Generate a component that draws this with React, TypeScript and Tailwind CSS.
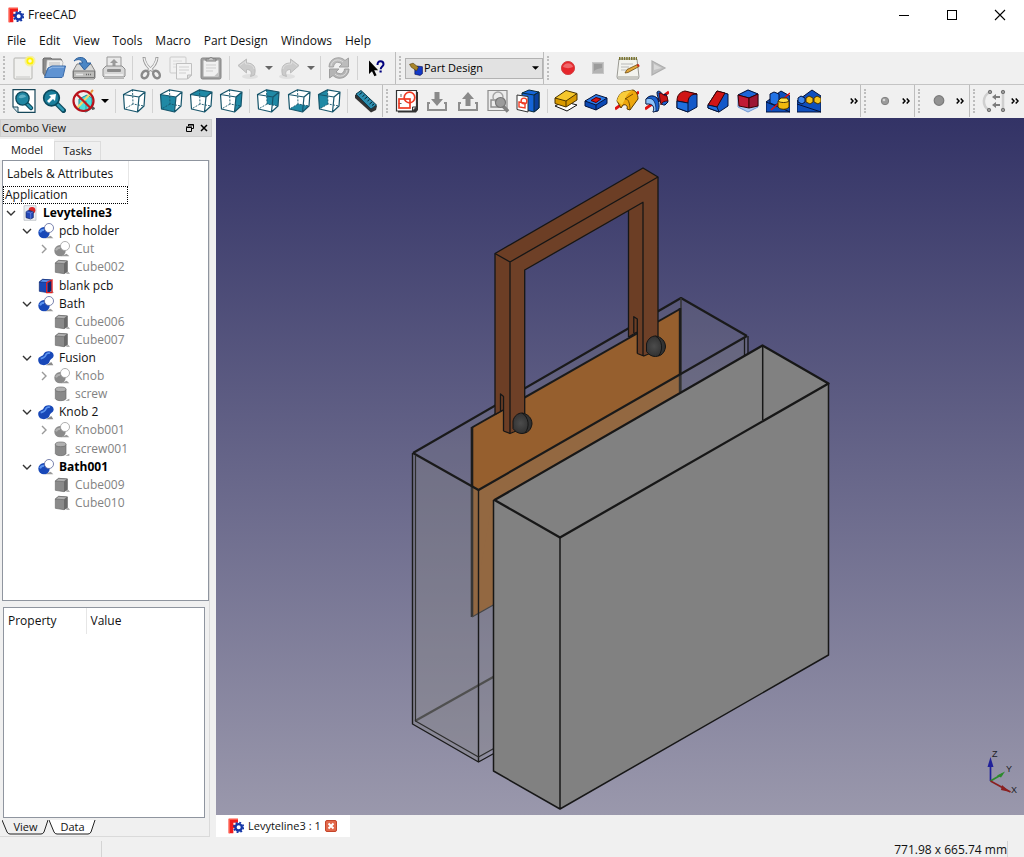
import type { ReactNode } from "react";

const INK = "#0b2a3a";

function Svg({ size = 24, children }: { size?: number; children: ReactNode }) {
  return (
    <svg width={size} height={size} viewBox="0 0 24 24" fill="none" aria-hidden="true" className="shrink-0">
      {children}
    </svg>
  );
}

/* ---------- file toolbar ---------- */

const NewIcon = () => (
  <Svg>
    <rect x="2" y="2" width="18" height="21" rx="1" fill="#f1f1ef" stroke="#b4b4b0" />
    <path d="M4 21h14" stroke="#dcdcda" strokeWidth="2" />
    <circle cx="18" cy="5" r="5.5" fill="#f7f08a" opacity=".8" />
    <circle cx="18" cy="5" r="3.6" fill="#fff200" />
    <circle cx="18" cy="5" r="1.8" fill="#fffbd0" />
  </Svg>
);
const OpenIcon = () => (
  <Svg>
    <path d="M1 3l1-1h7l1 1h9l1 2v15H3L1 17z" fill="#8b8b8b" stroke="#6b6b6b" />
    <path d="M5 4h14l2 2-1 8H4z" fill="#f0f0ee" stroke="#aaa" strokeWidth=".6" />
    <path d="M7 7h11M7 9h11" stroke="#bbb" />
    <path d="M6 12l4-2h13.500l-2.500 10.500-1 1H2.500z" fill="#5f93d2" stroke="#3a6ba8" />
    <path d="M7 13l3.500-1.800H22" stroke="#9cc0ea" />
  </Svg>
);
const SaveIcon = () => (
  <Svg>
    <path d="M1 15L5 8h14l4 7v7l-1 1H2l-1-1z" fill="#d8d8d6" stroke="#858585" />
    <path d="M1.500 15h21v6.500h-21z" fill="#bcbcba" stroke="#777" />
    <path d="M14 18.500h6" stroke="#6b6b6b" strokeWidth="1.500" strokeDasharray="1 1" />
    <path d="M4 18.500h7" stroke="#e8e8e8" strokeWidth="1.500" />
    <path d="M2 5C5 0 14 0 15 7h4l-6.500 7L7 7h3.500C10 3.500 6 2.500 2 5z" fill="#4a86c5" stroke="#2c5f9b" />
  </Svg>
);
const PrintIcon = () => (
  <Svg>
    <path d="M5 1h14v12H5z" fill="#e9e9e9" stroke="#999" />
    <path d="M10.500 11V7H8l4-4 4 4h-2.500v4z" fill="#9a9a9a" />
    <path d="M1 13l3-3h16l3 3v7l-1 1H2l-1-1z" fill="#d7d7d7" stroke="#8e8e8e" />
    <rect x="5" y="13" width="14" height="3" rx="1" fill="#8b8b8b" />
    <path d="M3 19h18" stroke="#f4f4f4" strokeWidth="1.500" />
    <path d="M2 22.500h20" stroke="#b5b5b5" />
  </Svg>
);
const CutIcon = () => (
  <Svg>
    <path d="M5 1c0 6 3 10 9 14M18 1c0 6-3 10-9 14" stroke="#9c9c9c" strokeWidth="3" />
    <path d="M5 2c1 5 3 9 8.500 12.500M18 2c-1 5-3 9-8.500 12.500" stroke="#f2f2f2" strokeWidth="1.300" />
    <ellipse cx="6" cy="18.500" rx="3" ry="4" stroke="#8a8a8a" strokeWidth="2.400" transform="rotate(35 6 18.500)" />
    <ellipse cx="17.500" cy="18.500" rx="3" ry="4" stroke="#8a8a8a" strokeWidth="2.400" transform="rotate(-35 17.500 18.500)" />
  </Svg>
);
const CopyIcon = () => (
  <Svg>
    <rect x="1" y="1" width="16" height="16" rx="1" fill="#f1f1f1" stroke="#cbcbcb" />
    <path d="M4 5h9M4 8h9M4 11h4" stroke="#dadada" />
    <path d="M7.500 7.500h15V19l-4 4h-11z" fill="#f3f3f3" stroke="#c0c0c0" />
    <path d="M10 11h10M10 14h10M10 17h7" stroke="#cfcfcf" />
    <path d="M22.500 19h-4v4z" fill="#dedede" stroke="#bbb" />
  </Svg>
);
const PasteIcon = () => (
  <Svg>
    <rect x="2" y="2" width="20" height="21" rx="1.500" fill="#a0a0a0" stroke="#858585" />
    <path d="M4.500 4.500h15v16h-15z" fill="#f0f0f0" />
    <path d="M7 9h10M7 12h10M7 15h7" stroke="#cdcdcd" />
    <path d="M7 5V3h3c0-2 4-2 4 0h3v2z" fill="#c4c4c4" stroke="#7f7f7f" />
    <path d="M19.500 16v4.500H15z" fill="#c3c3c3" />
  </Svg>
);
const UndoArrow = () => (
  <>
    <ellipse cx="14" cy="20.500" rx="8" ry="2.500" fill="#e0e0e0" />
    <path d="M2 9.500L10.500 3v4c7 0 10 4 8 12l-4 1.500c2-5 0-7-4-7V17z" fill="#cbcbcb" stroke="#bcbcbc" />
    <path d="M4 9.500l5.500-4V8c5 0 8 1.500 8.500 5" stroke="#dedede" />
  </>
);
const UndoIcon = () => (
  <Svg>
    <UndoArrow />
  </Svg>
);
const RedoIcon = () => (
  <Svg>
    <g transform="translate(23 0) scale(-1 1)">
      <UndoArrow />
    </g>
  </Svg>
);
const RefreshIcon = () => (
  <Svg>
    <path d="M2 11c0-9 11-12 16-6.500L21.500 2v9h-9.500l3-3C11 5 7 6 6.500 11z" fill="#bcbcbc" stroke="#a2a2a2" />
    <path d="M22 13c0 9-11 12-16 6.500L2.500 22v-9H12l-3 3c4 3 8 2 8.500-3z" fill="#b4b4b4" stroke="#9d9d9d" />
    <path d="M4 10c.5-6 8-8 12-4M20 14c-.5 6-8 8-12 4" stroke="#dadada" />
  </Svg>
);
const WhatsThisIcon = () => (
  <Svg>
    <path d="M5 4.500V18l3-2.700 2.400 5 2.200-1-2.400-5h4z" fill="#000" />
    <path d="M13.500 9c0-2.600 1.200-3.700 3-3.700s3 1 3 2.900c0 2.300-2.800 2.300-2.800 5" stroke="#00007d" strokeWidth="2" />
    <rect x="15.500" y="14.500" width="2.200" height="2" fill="#00007d" />
  </Svg>
);

/* ---------- macro toolbar ---------- */

const RecordIcon = () => (
  <Svg>
    <circle cx="12" cy="12" r="6.600" fill="#e6262b" stroke="#d3474a" />
    <path d="M7 11c1-5 9-5 10 0-3 1.500-7 1.500-10 0z" fill="#f0686b" />
  </Svg>
);
const StopIcon = () => (
  <Svg>
    <rect x="6.500" y="6.500" width="11" height="11" fill="#b3b3b3" stroke="#c7c7c7" />
    <path d="M8 8h8v4c-3 .5-6 1-8 3z" fill="#9b9b9b" />
  </Svg>
);
const MacrosIcon = () => (
  <Svg>
    <path d="M3 3h18l2 18-1 2H2l-1-2z" fill="#f3f3ee" stroke="#9a9a94" />
    <path d="M2 20h20v2.500H2z" fill="#c9c9c3" />
    <path d="M3 2.500h18" stroke="#77722d" strokeWidth="3" strokeDasharray="1.500 .9" />
    <path d="M5 8h12M5 11h8M5 14h5" stroke="#b9b9b9" />
    <path d="M9 17l2-3.500L21.500 8.500l1.500 2-11 6z" fill="#e3a83c" stroke="#6d4b12" strokeWidth=".8" />
    <path d="M20.500 8.800l2-.9 1.200 2-1.800 1z" fill="#c92a1c" />
  </Svg>
);
const PlayIcon = () => (
  <Svg>
    <path d="M6 5l13 7-13 7z" fill="#c1c1c1" stroke="#aeaeae" strokeWidth="1.200" />
    <path d="M8 8l7.500 4L8 14z" fill="#d9d9d9" />
  </Svg>
);

/* ---------- view toolbar ---------- */

const FitAllIcon = () => (
  <Svg>
    <path d="M1 .7h22v22.600H6L1 18z" fill="#fff" stroke="#16475a" strokeWidth="1.200" />
    <path d="M1 18h5v5.300" fill="#cfe3ea" stroke="#16475a" />
    <path d="M14 14l5 5" stroke="#0b4a5e" strokeWidth="4.500" strokeLinecap="round" />
    <path d="M14 14l5 5" stroke="#2e9ab5" strokeWidth="2.200" strokeLinecap="round" />
    <circle cx="10.500" cy="9.500" r="6.600" fill="#1f86a2" stroke="#0b4a5e" strokeWidth="1.400" />
    <path d="M6.500 8.500C7.500 5 13 4.500 14 8c-3 0-4 2.500-7.500.5z" fill="#5fb0c6" />
  </Svg>
);
const FitSelIcon = () => (
  <Svg>
    <path d="M15 15l6.500 6.500" stroke="#0b4a5e" strokeWidth="5" strokeLinecap="round" />
    <path d="M15.500 15.500l5.500 5.500" stroke="#2e9ab5" strokeWidth="2.500" strokeLinecap="round" />
    <circle cx="9.500" cy="9" r="7.800" fill="#1a7e9b" stroke="#0b4a5e" strokeWidth="1.700" />
    <path d="M5 12l4-4-2-2 7-1-1 7-2-2-4 4z" fill="#fff" />
  </Svg>
);
const DrawStyleIcon = () => (
  <Svg>
    <path d="M20 21c2 0 3-1 3-2l-4-3z" fill="#555" />
    <path d="M7 10l8-4 5 3v10l-6 4-7-2z" fill="#4fdcdc" stroke="#1d8d93" />
    <path d="M7 10l7 2v10" stroke="#1d8d93" strokeWidth=".8" />
    <path d="M5 19L20 3" stroke="#f5d76a" strokeWidth="2" />
    <path d="M19 3l2-2" stroke="#e7933a" strokeWidth="2" />
    <circle cx="11.500" cy="12" r="10" stroke="#b5121b" strokeWidth="2.200" />
    <path d="M4.500 5l14 14" stroke="#c3141d" strokeWidth="2.200" />
  </Svg>
);

const FACES = {
  none: "",
  front: "1.500,5.500 17,8 15.500,23 2.500,20",
  top: "1.500,5.500 10.500,0.800 23,3 17,8",
  right: "17,8 23,3 22,17 15.500,23",
  rear: "10.500,0.800 23,3 22,17 11,15",
  bottom: "2.500,20 11,15 22,17 15.500,23",
  left: "1.500,5.500 10.500,0.800 11,15 2.500,20",
};
function ViewCube({ face }: { face: keyof typeof FACES }) {
  return (
    <Svg>
      <path d="M1.500 5.500L10.500.8 23 3l-1 14-6.500 6-13-3z" fill="#fff" />
      <polygon points={FACES[face]} fill="#2089a5" />
      <path d="M10.500.8L11 15l11 2M11 15l-8.500 5" stroke="#16556b" strokeWidth=".9" strokeDasharray="2 1.200" />
      <path
        d="M1.500 5.500L10.500.8 23 3l-1 14-6.500 6-13-3zM1.500 5.500L17 8l6-5M17 8l-1.500 15"
        stroke="#16556b"
        strokeWidth="1.200"
        strokeLinejoin="round"
      />
    </Svg>
  );
}
const MeasureIcon = () => (
  <Svg>
    <path d="M1 6l6-4 16 15-1 4-5 2.500L1 9z" fill="#333" />
    <path d="M2 5l5-3.500L22.500 16l-5.500 4z" fill="#2d8fb0" stroke="#0d3d50" />
    <path d="M8 3.500L5.500 5.500M10.500 6l-2 1.500M13 8l-2.500 2M15.500 10.500l-2 1.500M18 13l-2.500 2M20 15l-2 1.500" stroke="#06222e" />
  </Svg>
);

/* ---------- part design toolbar ---------- */

const NewSketchIcon = () => (
  <Svg>
    <path d="M3 3h20v18l-2 2.500H3z" fill="#333" />
    <path d="M1.500 1.500h20V18l-4 4h-16z" fill="#fff" stroke="#333" strokeWidth="1.200" />
    <path d="M3.500 14.500h3M6 5v3" stroke="#555" strokeWidth=".9" />
    <rect x="4" y="10" width="11" height="9" stroke="#ef3b24" strokeWidth="1.700" />
    <circle cx="14.500" cy="8.500" r="5.300" stroke="#ef3b24" strokeWidth="1.700" />
    <path d="M21.500 18h-4v4z" fill="#ddd" stroke="#333" />
  </Svg>
);
const ImportIcon = () => (
  <Svg>
    <path d="M5 14H3v7h18v-7h-2" stroke="#8f8f8f" strokeWidth="2" />
    <path d="M9.500 3h5v7H18l-6 7-6-7h3.500z" fill="#8a8a8a" />
  </Svg>
);
const ExportIcon = () => (
  <Svg>
    <path d="M5 14H3v7h18v-7h-2" stroke="#8f8f8f" strokeWidth="2" />
    <path d="M9.500 17h5v-7H18l-6-7-6 7h3.500z" fill="#8a8a8a" />
  </Svg>
);
const ValidateIcon = () => (
  <Svg>
    <path d="M2 1.500h19v20H2z" fill="#ececec" stroke="#8b8b8b" strokeWidth="1.200" />
    <path d="M5 11h7v7H5z" stroke="#8d8d8d" strokeWidth="1.400" />
    <circle cx="12" cy="8" r="5" stroke="#a5a5a5" strokeWidth="1.400" />
    <path d="M17 17l5 5.500" stroke="#808080" strokeWidth="3.500" />
    <circle cx="14.500" cy="13.500" r="5" fill="#9b9b9b" stroke="#777" strokeWidth="1.200" />
  </Svg>
);
const MapSketchIcon = () => (
  <Svg>
    <path d="M6 4l7-3 10 2v16l-5 4-12-3z" fill="#1565d8" stroke={INK} />
    <path d="M18 6l5-3v16l-5 4z" fill="#0a3f9c" stroke={INK} />
    <path d="M6 4l12 2 5-3" stroke={INK} />
    <path d="M1 6l11 1.500V23L1 20.500z" fill="#fff" stroke="#333" />
    <path d="M3 13l6 1v5l-6-1z" stroke="#ef3b24" strokeWidth="1.400" />
    <circle cx="8" cy="12" r="2.900" stroke="#ef3b24" strokeWidth="1.400" />
  </Svg>
);
const PadIcon = () => (
  <Svg>
    <path d="M1 17l9-4.500L23 16l-10 6z" fill="#fff" stroke="#111" />
    <path d="M1 9v5.500l11 3.500 11-7V4.500z" fill="#d99a00" stroke="#4a3300" />
    <path d="M1 9l11-7.500 11 3L12 12z" fill="#f6c72c" stroke="#4a3300" />
    <path d="M12 12v6" stroke="#4a3300" />
  </Svg>
);
const PocketIcon = () => (
  <Svg>
    <path d="M1 12v5l11 4 11-6.500V9z" fill="#0b49b5" stroke="#04133a" />
    <path d="M1 12l11-6.500L23 9l-11 7z" fill="#2a7be8" stroke="#04133a" />
    <path d="M7 11.500l5-3 5 1.500-5 3.500z" fill="#d71414" stroke="#5a0000" />
    <path d="M12 16v5" stroke="#04133a" />
  </Svg>
);
const RevolveIcon = () => (
  <Svg>
    <path d="M0 20L24 3" stroke="#e01010" strokeWidth="2.800" />
    <path d="M2 12C3 7 6 3 10 2.500L18 1c3 1 5 4 5 9l-8 11-3-1c1-3-1-5-4-4l-2 3z" fill="#eda70c" stroke="#5b3b00" />
    <path d="M2 12C3 7 6 3 10 2.500L18 1c-4 2-7 5-8 9l-3 6z" fill="#f9cc3a" />
    <path d="M10 10c3-1 5 4 5 11M10 10l8-5" stroke="#5b3b00" strokeWidth=".8" />
  </Svg>
);
const GrooveIcon = () => (
  <Svg>
    <path d="M0 20L24 3" stroke="#e01010" strokeWidth="2.800" />
    <path d="M12 3c2-2 4 0 6 3l3-1 2 8-3 3c-4 1-8-7-8-13z" fill="#1b62cf" stroke="#04133a" />
    <path d="M14 4c4 0 4 3 8 3l1 5c-4 0-6 1-7 4z" fill="#c81414" stroke="#400" strokeWidth=".8" />
    <path d="M1 10c3-4 8-4 11-1 2 3 3 9 1 13l-5 1c2-5 0-9-7-8z" fill="#1b62cf" stroke="#04133a" />
    <path d="M1 10c6-2 10 1 10 12l-3 1c2-5 0-9-7-8z" fill="#8cc2fa" stroke="#04133a" strokeWidth=".6" />
  </Svg>
);
const FilletIcon = () => (
  <Svg>
    <path d="M2 12l10-9 10 2v13l-9 5-11-4z" fill="#1459c9" stroke="#04133a" />
    <path d="M2 12c0-6 3-9 8-10l12 3c-6 0-9 3-9 9z" fill="#d01515" stroke="#3b0000" />
    <path d="M2 12l11 2v9l-11-4z" fill="#1f6fe0" stroke="#04133a" />
  </Svg>
);
const ChamferIcon = () => (
  <Svg>
    <path d="M2 16L11 2l11 3v12l-9 6-11-4z" fill="#1459c9" stroke="#04133a" />
    <path d="M2 16l9-14 8 2-8 14z" fill="#d01515" stroke="#3b0000" />
    <path d="M2 16l9 2 2 5-11-4z" fill="#1f6fe0" stroke="#04133a" />
  </Svg>
);
const DraftIcon = () => (
  <Svg>
    <path d="M2 6l10-5 10 4v13l-10 5-10-5z" fill="#a9c8f2" stroke="#6d96d2" />
    <path d="M2 6l10-5 10 4-9 4z" fill="#1c66d8" stroke="#04133a" />
    <path d="M2 6l11 3v10L3 17z" fill="#c21a35" stroke="#3b0000" />
    <path d="M13 9l9-4v12l-9 2z" fill="#9c1634" stroke="#3b0000" />
  </Svg>
);
const MirrorIcon = () => (
  <Svg>
    <path d="M0 13L15 2l9 5v16H0z" fill="#0f4fbd" stroke="#04133a" />
    <path d="M0 13l13 5 11 5" stroke="#04133a" />
    <path d="M4 5l4-2 5 2v9l-4 2-5-2z" fill="#2273e6" stroke="#04133a" />
    <path d="M5 21L24 4" stroke="#e01010" strokeWidth="1.500" />
    <path d="M12 12v6c2 3 9 3 11 0v-6z" fill="#f0b90d" stroke="#4a3300" />
    <path d="M12 12l3-3h6l2 3c-2 2-9 2-11 0z" fill="#ffdf45" stroke="#4a3300" />
  </Svg>
);
const PatternIcon = () => (
  <Svg>
    <path d="M0 12L15 1l9 6v16H0z" fill="#0f4fbd" stroke="#04133a" />
    <path d="M0 15l12 4 12 4" stroke="#04133a" />
    <path d="M1 9l3-2 4 2v4l-3 2-4-2z" fill="#3b86ee" stroke="#04133a" />
    <path d="M9 9l3-2 4 2v4l-3 2-4-2zM17 9l3-2 4 2v4l-3 2-4-2z" fill="#f4c21c" stroke="#4a3300" />
  </Svg>
);
const PointIcon = () => (
  <Svg>
    <circle cx="12" cy="12" r="3.700" fill="#9b9b9b" stroke="#828282" />
    <circle cx="11" cy="11" r="1.300" fill="#d5d5d5" />
  </Svg>
);
const DiscIcon = () => (
  <Svg>
    <circle cx="12" cy="11.500" r="4.800" fill="#929292" stroke="#7b7b7b" strokeWidth="1.200" />
  </Svg>
);
const MapShapeIcon = () => (
  <Svg>
    <path d="M8 3C0 7 0 17 7 21" stroke="#cfcfcf" strokeWidth="2.500" />
    <path d="M21 3v18" stroke="#cfcfcf" strokeWidth="2.500" />
    <path d="M18 8h-5M18 16h-5" stroke="#7c7c7c" strokeWidth="1.800" />
    <path d="M14 5l-4 3 4 3zM14 13l-4 3 4 3z" fill="#7c7c7c" />
    <g fill="#9a9a9a" stroke="#727272">
      <circle cx="8" cy="3" r="1.700" />
      <circle cx="7" cy="21" r="1.700" />
      <circle cx="21" cy="3" r="1.700" />
      <circle cx="21" cy="21" r="1.700" />
    </g>
  </Svg>
);

const Logo = () => (
  <Svg size={16}>
    <path d="M1 1h14v6H8v3h6v5H8v8H1z" fill="#f01c1c" />
    <path d="M1 1h14v2H3v20H1z" fill="#ff5a4a" />
    <circle cx="16" cy="14" r="4.800" stroke="#1437a8" strokeWidth="3.500" fill="#fff" />
    <circle cx="16" cy="14" r="7.200" stroke="#1437a8" strokeWidth="2.400" strokeDasharray="2.900 2.755" />
  </Svg>
);

/* ---------- tree icons ---------- */

type Kind = "doc" | "cut" | "cube" | "cubeOn" | "fuse" | "cyl";

function TreeIcon({ kind, off }: { kind: Kind; off?: boolean }) {
  const body = off ? "#8a8a8a" : "#1848b8";
  const dark = off ? "#6a6a6a" : "#0a246e";
  const light = off ? "#b0b0b0" : "#5c94ef";
  if (kind === "doc")
    return (
      <Svg size={16}>
        <path d="M3 1h18v22H3z" fill="#eceff3" stroke="#b4b8be" />
        <circle cx="15" cy="8" r="5" fill="#d92424" />
        <path d="M6 10l4-2 7 2v9l-4 2-7-2z" fill="#2448b8" stroke="#14245e" />
        <path d="M6 10l7 2 4-2M13 12v9" stroke="#8aa4ee" strokeWidth=".8" />
      </Svg>
    );
  if (kind === "cut")
    return (
      <Svg size={16}>
        <path d="M10 23h13l-4-4z" fill="#9a9a9a" />
        <circle cx="9" cy="14.500" r="8.500" fill={body} />
        <path d="M3 14c1-3 3-4 6-4" stroke={light} strokeWidth="3" />
        <circle cx="16.500" cy="7.500" r="6.800" fill="#fff" stroke={off ? "#9c9c9c" : "#5a669a"} strokeWidth="1.200" />
      </Svg>
    );
  if (kind === "fuse")
    return (
      <Svg size={16}>
        <path d="M12 23h11l-3-5z" fill="#8a8a8a" />
        <path d="M8 7C10 0 23 0 23.500 8c0 5-5 5-6 9-2 8-17 8-17.200-2C.3 9 6 10 8 7z" fill={body} />
        <path d="M4 13c4-1 7-3 8-6 1-2 4-3 6-2" stroke={light} strokeWidth="2.500" />
      </Svg>
    );
  if (kind === "cyl")
    return (
      <Svg size={16}>
        <path d="M17 22h6v-3z" fill="#999" />
        <path d="M2 5v14c2 4 14 4 16 0V5z" fill={body} stroke={dark} />
        <ellipse cx="10" cy="5" rx="8" ry="3.500" fill={light} stroke={dark} />
      </Svg>
    );
  return (
    <Svg size={16}>
      <path d="M18 22h6l-3-3z" fill="#999" />
      <path d="M2 6l5-4 13 1v16l-5 3-13-2z" fill={body} stroke={dark} />
      <path d="M2 6l5-4 13 1-5 4z" fill={light} stroke={dark} />
      <path d="M15 7l5-4v16l-5 3z" fill={dark} />
      {kind === "cubeOn" && <path d="M13 7v15h9M13 7l8-4v19" stroke="#e02020" strokeWidth="2" />}
    </Svg>
  );
}

interface Node {
  label: string;
  depth: number;
  kind: Kind;
  off?: boolean;
  bold?: boolean;
  open?: boolean;
}
const TREE: Node[] = [
  { label: "Levyteline3", depth: 0, kind: "doc", bold: true, open: true },
  { label: "pcb holder", depth: 1, kind: "cut", open: true },
  { label: "Cut", depth: 2, kind: "cut", off: true, open: false },
  { label: "Cube002", depth: 2, kind: "cube", off: true },
  { label: "blank pcb", depth: 1, kind: "cubeOn" },
  { label: "Bath", depth: 1, kind: "cut", open: true },
  { label: "Cube006", depth: 2, kind: "cube", off: true },
  { label: "Cube007", depth: 2, kind: "cube", off: true },
  { label: "Fusion", depth: 1, kind: "fuse", open: true },
  { label: "Knob", depth: 2, kind: "cut", off: true, open: false },
  { label: "screw", depth: 2, kind: "cyl", off: true },
  { label: "Knob 2", depth: 1, kind: "fuse", open: true },
  { label: "Knob001", depth: 2, kind: "cut", off: true, open: false },
  { label: "screw001", depth: 2, kind: "cyl", off: true },
  { label: "Bath001", depth: 1, kind: "cut", bold: true, open: true },
  { label: "Cube009", depth: 2, kind: "cube", off: true },
  { label: "Cube010", depth: 2, kind: "cube", off: true },
];
const INDENT = ["pl-0", "pl-4", "pl-8"];

function TreeRow({ node }: { node: Node }) {
  return (
    <li role="treeitem" aria-expanded={node.open} className={`flex items-center ${INDENT[node.depth]}`}>
      <span className="flex w-[15px] justify-center">
        {node.open !== undefined && (
          <svg width="10" height="10" viewBox="0 0 10 10" fill="none" aria-hidden="true">
            <path
              d={node.open ? "M1 3l4 4 4-4" : "M4 1l4 4-4 4"}
              stroke={node.open ? "#333" : "#999"}
              strokeWidth="1.400"
            />
          </svg>
        )}
      </span>
      <span className="px-1">
        <TreeIcon kind={node.kind} off={node.off} />
      </span>
      <span className={`pl-px whitespace-nowrap ${node.bold ? "font-bold text-black" : node.off ? "text-[#828282]" : "text-[#111]"}`}>
        {node.label}
      </span>
    </li>
  );
}

/* ---------- toolbar parts ---------- */

function Tool({ label, children }: { label: string; children: ReactNode }) {
  return (
    <button type="button" aria-label={label} className="flex h-8 w-[30px] shrink-0 items-center justify-center">
      {children}
    </button>
  );
}
function Drop({ label, dim }: { label: string; dim?: boolean }) {
  return (
    <button type="button" aria-label={label} className="flex h-8 w-3 shrink-0 items-center justify-center">
      <svg width="8" height="4" viewBox="0 0 8 4" aria-hidden="true">
        <path d="M0 0h8L4 4z" fill={dim ? "#666" : "#000"} />
      </svg>
    </button>
  );
}
const Sep = () => <span className="mx-[3px] h-6 w-px shrink-0 bg-[#d2d2d2]" />;
const Handle = () => (
  <span className="flex w-[9px] shrink-0 items-center pl-[3px]">
    <span className="h-6 border-l-2 border-dotted border-[#bdbdbd]" />
  </span>
);
const More = () => (
  <button type="button" aria-label="More tools" className="flex h-8 w-3 shrink-0 items-center justify-center">
    <svg width="8" height="6" viewBox="0 0 8 6" fill="none" stroke="#000" strokeWidth="1.500" aria-hidden="true">
      <path d="M.7.5L3 3 .7 5.500M4.700.5L7 3 4.700 5.500" />
    </svg>
  </button>
);

/* ---------- 3D scene ---------- */

function Scene() {
  return (
    <svg
      viewBox="216 118 808 697"
      preserveAspectRatio="xMidYMid slice"
      className="h-full w-full"
      role="img"
      aria-label="3D view of Levyteline3"
      fill="none"
      strokeLinejoin="round"
    >
      <defs>
        <linearGradient id="sky" x1="0" y1="0" x2="0" y2="1">
          <stop offset="0" stopColor="#333366" />
          <stop offset="1" stopColor="#9a98ac" />
        </linearGradient>
        <radialGradient id="ball" cx=".4" cy=".5" r=".6">
          <stop offset="0" stopColor="#4c4c4c" />
          <stop offset="1" stopColor="#2c2c2c" />
        </radialGradient>
      </defs>
      <rect x="216" y="118" width="808" height="697" fill="url(#sky)" />

      {/* rear of the glass bath */}
      <path d="M413 453L681 298l66 38v180L478 762l-65-38z" fill="#808080" fillOpacity=".2" />
      <path d="M413 453L681 298l66 38" stroke="#1a1a1a" strokeWidth="2.200" />
      <path d="M681 298v95" stroke="#333" strokeWidth="1.500" />
      <path d="M415 721l80-45" stroke="#3f3f3f" strokeWidth="2.200" />

      {/* circuit board */}
      <path d="M472 427.500L680 309v100L472 616.500z" fill="#965f2e" />
      <path d="M472 617l24-14V480z" fill="#965f2e" />
      <path d="M472 427.500L680 309" stroke="#1a1a1a" strokeWidth="2" />
      <path d="M472 427v190" stroke="#1c1c1c" strokeWidth="2.600" />
      <path d="M680 308v84" stroke="#1c1c1c" strokeWidth="2.400" />
      <path d="M472 617l24-13.500" stroke="#333" strokeWidth="1.200" />

      {/* front faces of the glass bath */}
      <path d="M413 453l65 37v272l-65-38z" fill="#858585" fillOpacity=".25" />
      <path d="M478 490l269-154v200L478 762z" fill="#8a8a8a" fillOpacity=".22" />
      <path d="M413 453l65.500 37L747 336" stroke="#1a1a1a" strokeWidth="2.200" />
      <path d="M412.500 453v271l66 38 18-10M478.500 490v272" stroke="#1a1a1a" strokeWidth="1.400" />
      <path d="M415.500 455v266l63 36 18-10" stroke="#2d2d2d" strokeWidth="1.200" />
      <path d="M744.500 338v18M748 336v18" stroke="#1a1a1a" strokeWidth="1.300" />

      {/* handle */}
      <path d="M495 253.500L643 168l15 9v170l-14.500 9-6-2.500V332l-9 4.500V211l-104 59v155l-15 8.500-6-2.500v-21l-8.500 4.500z" fill="#6c3e25" />
      <path d="M510 262L658 177v170l-14.500 9V202.500L525 270v155l-15.500 8z" fill="#6e4027" />
      <g stroke="#161616" strokeWidth="1.300">
        <path d="M495 414V253.500L643 168l15 9v163" />
        <path d="M495 253.500l15 8.500L658 177M510 262v171" />
        <path d="M524.700 416V270L643 202.300V356M628.500 211v126" />
        <path d="M495 414.500l8-4.500M503.500 431l6.500 2.500 6-2.500M503.500 431v-34.500l-3-2.500v17" />
        <path d="M628.500 337l8.500-5M637.300 353.500l6.500 2.500 7-3M637.300 353.500V319l-3.500-2.300V333" />
      </g>

      {/* knobs */}
      <g stroke="#151515" strokeWidth="1">
        <path d="M513 421c1-5 5-8 9-8 6 1 10 5 10 11-1 6-4 9-10 9.500-4 0-7-2-9-5z" fill="url(#ball)" />
        <path d="M522 413c7 4 8 14 3 20" />
        <path d="M646.500 344c1-5 5-8 9-8 6 1 10 5 10 11-1 6-4 9-10 9.500-4 0-7-2-9-5z" fill="url(#ball)" />
        <path d="M655.500 336c7 4 8 14 3 20" />
      </g>

      {/* solid bath */}
      <path d="M493.500 501l269-156 66 38.500V655L560 809l-66.500-38z" fill="#818181" />
      <path d="M494.500 500L762.500 345.500l66 38L560 537.500z" stroke="#171717" strokeWidth="2.300" />
      <path d="M493.500 500v271l66.500 38 268.500-154V383M560 537.500V809M762.700 345v75" stroke="#171717" strokeWidth="1.500" />

      {/* axis cross */}
      <g strokeWidth="1.700">
        <path d="M990.500 781v-18" stroke="#20209a" />
        <path d="M987.500 767l3-10 3 10z" fill="#20209a" />
        <path d="M990.500 781l12-7" stroke="#2b8a2b" />
        <path d="M997 775.500l8-4-4 6z" fill="#2b8a2b" />
        <path d="M990.500 781l20 11" stroke="#8a2020" />
        <path d="M1002 785l8 7-9-2z" fill="#8a2020" />
      </g>
      <g fill="#1c1c24" className="font-['Liberation_Sans',sans-serif] text-[9px]">
        <text x="992" y="757">Z</text>
        <text x="1006" y="772">Y</text>
        <text x="1011" y="793">X</text>
      </g>
    </svg>
  );
}

const MENUS = ["File", "Edit", "View", "Tools", "Macro", "Part Design", "Windows", "Help"];

export default function App() {
  return (
    <div className="flex h-screen flex-col overflow-hidden bg-[#f0f0f0] font-['Open_Sans','Noto_Sans',sans-serif] text-xs text-[#111]">
      <header className="bg-white">
        <div className="flex h-[30px] items-center">
          <div className="flex flex-1 items-center gap-1 pl-2">
            <Logo />
            <h1>FreeCAD</h1>
          </div>
          <div className="flex">
            <button type="button" aria-label="Minimize" className="flex w-12 justify-center">
              <svg width="12" height="12" viewBox="0 0 12 12"><path d="M1 6.500h10" stroke="#000" /></svg>
            </button>
            <button type="button" aria-label="Maximize" className="flex w-12 justify-center">
              <svg width="12" height="12" viewBox="0 0 12 12"><rect x="1.500" y="1.500" width="9" height="9" fill="none" stroke="#000" /></svg>
            </button>
            <button type="button" aria-label="Close" className="flex w-12 justify-center">
              <svg width="12" height="12" viewBox="0 0 12 12"><path d="M1 1l10 10M11 1L1 11" stroke="#000" strokeWidth="1.100" /></svg>
            </button>
          </div>
        </div>
        <nav aria-label="Main menu" className="flex h-[22px] items-center gap-[13px] pl-[7px]">
          {MENUS.map((m) => (
            <button key={m} type="button">{m}</button>
          ))}
        </nav>
      </header>

      <div className="flex h-[33px] shrink-0 border-b border-[#c4c4c4]">
        <div role="toolbar" aria-label="File" className="flex w-[396px] items-center border-r border-[#bdbdbd]">
          <Handle />
          <div className="flex flex-1 items-center justify-between pr-1">
            <Tool label="New"><NewIcon /></Tool>
            <Tool label="Open"><OpenIcon /></Tool>
            <Tool label="Save"><SaveIcon /></Tool>
            <Tool label="Print"><PrintIcon /></Tool>
            <Sep />
            <Tool label="Cut"><CutIcon /></Tool>
            <Tool label="Copy"><CopyIcon /></Tool>
            <Tool label="Paste"><PasteIcon /></Tool>
            <Sep />
            <Tool label="Undo"><UndoIcon /></Tool>
            <Drop label="Undo history" dim />
            <Tool label="Redo"><RedoIcon /></Tool>
            <Drop label="Redo history" dim />
            <Sep />
            <Tool label="Refresh"><RefreshIcon /></Tool>
            <Sep />
            <Tool label="What's this?"><WhatsThisIcon /></Tool>
          </div>
        </div>
        <div role="toolbar" aria-label="Workbench" className="flex w-[148px] items-center border-r border-[#bdbdbd]">
          <Handle />
          <div className="relative w-[138px]">
            <select aria-label="Workbench" className="h-[21px] w-full appearance-none border border-[#b2b2b2] bg-[#e2e2e2] pl-[18px] text-[11px] leading-4 text-black">
              <option>Part Design</option>
            </select>
            <svg width="14" height="14" viewBox="0 0 24 24" className="pointer-events-none absolute top-1 left-1" aria-hidden="true">
              <path d="M10 9l4-2 9 1v12l-4 3-9-2z" fill="#1239c8" stroke="#000040" />
              <path d="M1 4l6-2 9 7-3 6-9-6z" fill="#a8852a" stroke="#4a3300" />
            </svg>
            <svg width="7" height="4" viewBox="0 0 8 4" className="pointer-events-none absolute top-2 right-1" aria-hidden="true">
              <path d="M0 0h8L4 4z" fill="#000" />
            </svg>
          </div>
        </div>
        <div role="toolbar" aria-label="Macro" className="flex items-center">
          <Handle />
          <Tool label="Record macro"><RecordIcon /></Tool>
          <Tool label="Stop recording"><StopIcon /></Tool>
          <Tool label="Macros"><MacrosIcon /></Tool>
          <Tool label="Run macro"><PlayIcon /></Tool>
        </div>
      </div>

      <div className="flex h-8 shrink-0">
        <div role="toolbar" aria-label="View" className="flex w-[383px] shrink-0 items-center border-r border-[#bdbdbd]">
          <Handle />
          <div className="flex flex-1 items-center justify-between pr-px">
            <Tool label="Fit all"><FitAllIcon /></Tool>
            <Tool label="Fit selection"><FitSelIcon /></Tool>
            <Tool label="Draw style"><DrawStyleIcon /></Tool>
            <Drop label="Draw styles" />
            <Sep />
            <Tool label="Axonometric"><ViewCube face="none" /></Tool>
            <Sep />
            <Tool label="Front"><ViewCube face="front" /></Tool>
            <Tool label="Top"><ViewCube face="top" /></Tool>
            <Tool label="Right"><ViewCube face="right" /></Tool>
            <Sep />
            <Tool label="Rear"><ViewCube face="rear" /></Tool>
            <Tool label="Bottom"><ViewCube face="bottom" /></Tool>
            <Tool label="Left"><ViewCube face="left" /></Tool>
            <Sep />
            <Tool label="Measure distance"><MeasureIcon /></Tool>
          </div>
        </div>
        <div role="toolbar" aria-label="Part Design" className="flex flex-1 items-center border-r border-[#bdbdbd]">
          <Handle />
          <div className="flex flex-1 items-center justify-between">
            <Tool label="New sketch"><NewSketchIcon /></Tool>
            <Tool label="Edit sketch"><ImportIcon /></Tool>
            <Tool label="Leave sketch"><ExportIcon /></Tool>
            <Tool label="View sketch"><ValidateIcon /></Tool>
            <Tool label="Map sketch"><MapSketchIcon /></Tool>
            <Sep />
            <Tool label="Pad"><PadIcon /></Tool>
            <Tool label="Pocket"><PocketIcon /></Tool>
            <Tool label="Revolution"><RevolveIcon /></Tool>
            <Tool label="Groove"><GrooveIcon /></Tool>
            <Tool label="Fillet"><FilletIcon /></Tool>
            <Tool label="Chamfer"><ChamferIcon /></Tool>
            <Tool label="Draft"><DraftIcon /></Tool>
            <Tool label="Mirrored"><MirrorIcon /></Tool>
            <Tool label="Linear pattern"><PatternIcon /></Tool>
          </div>
          <span className="w-6" />
          <More />
        </div>
        <div role="toolbar" aria-label="Points" className="flex w-[54px] items-center border-r border-[#bdbdbd]">
          <Handle /><Tool label="Point"><PointIcon /></Tool><More />
        </div>
        <div role="toolbar" aria-label="Constraints" className="flex w-[55px] items-center border-r border-[#bdbdbd]">
          <Handle /><Tool label="Coincident"><DiscIcon /></Tool><More />
        </div>
        <div role="toolbar" aria-label="Sketcher tools" className="flex w-[54px] items-center">
          <Handle /><Tool label="Select edges"><MapShapeIcon /></Tool><More />
        </div>
      </div>

      <div className="flex min-h-0 flex-1 pt-px">
        <aside className="flex w-[216px] shrink-0 flex-col">
          <div className="mt-px mr-1 flex h-[18px] shrink-0 items-center border border-[#cfcfcf] bg-[#dcdcdc] pl-px text-[11px] leading-4">
            <h2 className="flex-1">Combo View</h2>
            <button type="button" aria-label="Float" className="px-[3px]">
              <svg width="8" height="8" viewBox="0 0 8 8" fill="none" stroke="#000"><path d="M2.500 2V.5h5v4H6M2 1h6" /><path d="M.5 3.500h5v4h-5zM0 3h6" /></svg>
            </button>
            <button type="button" aria-label="Close panel" className="px-[3px]">
              <svg width="8" height="8" viewBox="0 0 8 8"><path d="M1 1l6 6M7 1L1 7" stroke="#000" strokeWidth="1.500" /></svg>
            </button>
          </div>
          <div role="tablist" className="flex h-[23px] shrink-0 items-end pt-[2px] text-[11px] leading-4">
            <button type="button" role="tab" aria-selected="true" className="h-full w-[54px] bg-white">Model</button>
            <button type="button" role="tab" aria-selected="false" className="h-[19px] w-[47px] border border-b-0 border-[#dcdcdc]">Tasks</button>
          </div>
          <div className="mr-[6px] flex min-h-0 flex-1 flex-col border-r border-b border-[#dadada] pl-0.5">
            <div className="min-h-0 flex-1 border border-[#8f959f] bg-white">
              <div className="flex h-[25px] w-[126px] items-center border-r border-[#e6e6e6] pl-1">Labels &amp; Attributes</div>
              <div className="flex h-[18px] w-[125px] items-center border border-dotted border-black pl-px">Application</div>
              <ul role="tree" aria-label="Model tree" className="grid h-[308px] auto-rows-fr">
                {TREE.map((n) => (
                  <TreeRow key={n.label} node={n} />
                ))}
              </ul>
            </div>
            <div className="mt-[6px] mr-1 ml-px h-[211px] shrink-0 border border-[#8f959f] bg-white">
              <table className="w-full table-fixed text-left">
                <thead>
                  <tr className="h-[26px]">
                    <th scope="col" className="w-[82px] border-r border-[#e6e6e6] pl-1 font-normal">Property</th>
                    <th scope="col" className="pl-1 font-normal">Value</th>
                  </tr>
                </thead>
              </table>
            </div>
            <div role="tablist" className="mt-px flex h-[17px] shrink-0 text-[11px] leading-4">
              {["View", "Data"].map((t) => (
                <button key={t} type="button" role="tab" aria-selected={t === "Data"} className="relative h-4 w-[47px]">
                  <svg viewBox="0 0 47 16" className="absolute inset-0 h-4 w-[47px]" fill={t === "Data" ? "#fff" : "#f0f0f0"} aria-hidden="true">
                    <path d="M0 1l5 12q1 2 3 2h31q2 0 3-2l4-12" stroke="#222" />
                  </svg>
                  <span className="relative">{t}</span>
                </button>
              ))}
            </div>
          </div>
        </aside>
        <main className="flex min-w-0 flex-1 flex-col">
          <div className="min-h-0 flex-1 overflow-hidden">
            <Scene />
          </div>
          <div role="tablist" className="flex h-[22px] shrink-0">
            <div className="flex items-center gap-1 bg-white pr-[13px] pl-3 text-[11px] leading-4">
              <Logo />
              <button type="button" role="tab" aria-selected="true">Levyteline3 : 1</button>
              <button type="button" aria-label="Close document">
                <svg width="12" height="12" viewBox="0 0 12 12"><rect x=".5" y=".5" width="11" height="11" rx="1.500" fill="#e2684b" stroke="#c4452a" /><path d="M3.500 3.500l5 5M8.500 3.500l-5 5" stroke="#fff" strokeWidth="2" /></svg>
              </button>
            </div>
          </div>
        </main>
      </div>

      <footer className="flex h-5 shrink-0 items-end pr-4">
        <span className="h-4 w-[102px] border-r border-[#d4d4d4]" />
        <span className="flex h-4 flex-1 items-end justify-end border-r border-[#d4d4d4] leading-[14px]">771.98 x 665.74 mm</span>
      </footer>
    </div>
  );
}
